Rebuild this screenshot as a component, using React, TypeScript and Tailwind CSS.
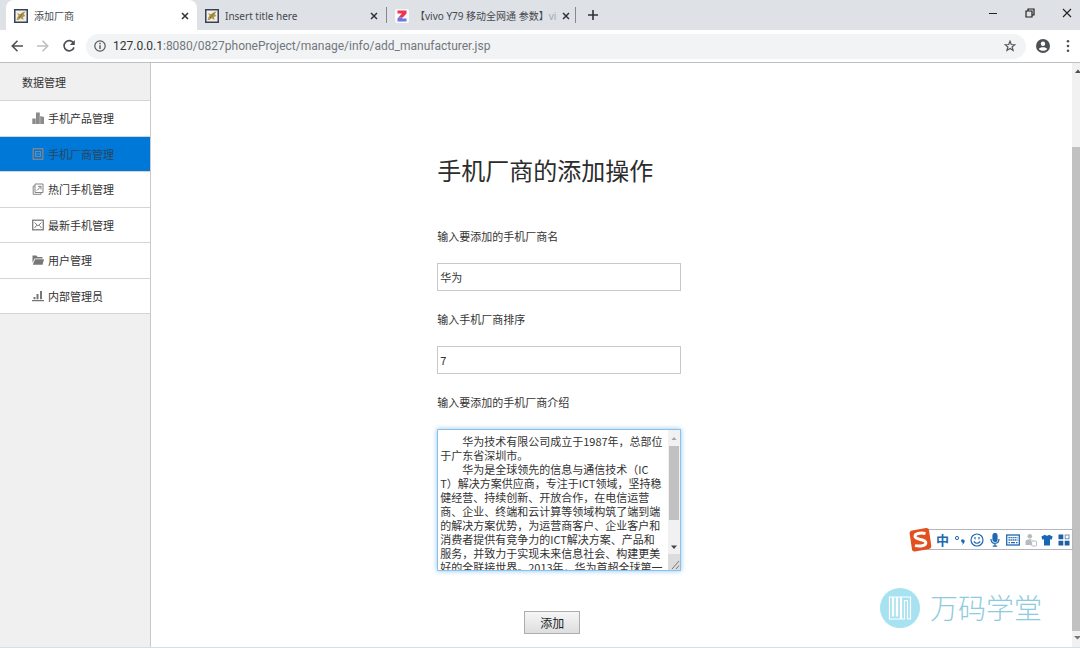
import type { ReactNode } from "react";

function PageIcon() {
  return (
    <svg viewBox="0 0 14 14" className="h-3.5 w-3.5 shrink-0" aria-hidden="true">
      <rect x="0.75" y="0.75" width="12.5" height="12.5" fill="#f4efe2" stroke="#34425a" strokeWidth="1.5" />
      <path d="M2.5 10.5 L4.5 6.5 L3 4 L6 5.2 L9 3 L11.5 2.5 L9.8 5 L11.3 7 L9 8 L9.5 11 L6.5 9.3 L4 11.3 Z" fill="#b09650" />
      <path d="M5 9 L8.5 4.5" stroke="#5c5746" strokeWidth="0.7" />
    </svg>
  );
}

function ZolIcon() {
  return (
    <svg viewBox="0 0 14 14" className="h-3.5 w-3.5 shrink-0" aria-hidden="true">
      <rect width="14" height="14" rx="2" fill="#fafafa" />
      <path d="M2.5 1.5 H11.5 V4.4 L8 8.2 H3.6 L7 4.5 H2.5 Z" fill="#ef3350" />
      <path d="M3.6 8.2 H8 L6.8 9.6 H11.5 V12.6 H2.5 V9.5 Z" fill="#6f74e6" />
    </svg>
  );
}

function CrossIcon() {
  return (
    <svg viewBox="0 0 8 8" className="h-2 w-2" stroke="#2f3237" strokeWidth="1.5" aria-hidden="true">
      <path d="M1 1 L7 7 M7 1 L1 7" />
    </svg>
  );
}

function Tab({ icon, title, active, faded }: { icon: ReactNode; title: string; active?: boolean; faded?: string }) {
  return (
    <div
      className={
        active
          ? "flex h-full w-[191px] items-center gap-1.5 rounded-t-lg bg-white px-2 pt-0.5"
          : "flex h-full items-center gap-1.5 px-2 pt-0.5"
      }
    >
      {icon}
      <span className="flex-1 text-[10px] leading-4 whitespace-nowrap text-[#45494d]">
        {title}
        {faded && <span className="text-[#a5a9ae]">{faded}</span>}
      </span>
      <button type="button" aria-label="关闭标签页" className="flex h-4 w-2 items-center justify-center">
        <CrossIcon />
      </button>
    </div>
  );
}

function TabStrip() {
  return (
    <header className="flex h-[30px] shrink-0 items-center bg-[#dee1e6] pl-1.5">
      <Tab icon={<PageIcon />} title="添加厂商" active />
      <div className="h-full w-[189px]">
        <Tab icon={<PageIcon />} title="Insert title here" />
      </div>
      <span className="h-4 w-px bg-[#85898f]" />
      <div className="h-full w-[188px]">
        <Tab icon={<ZolIcon />} title="【vivo Y79 移动全网通 参数】" faded="vi" />
      </div>
      <span className="h-4 w-px bg-[#85898f]" />
      <button type="button" aria-label="新标签页" className="ml-2.5 p-0.5">
        <svg viewBox="0 0 10 10" className="h-2.5 w-2.5" stroke="#2f3237" strokeWidth="1.6" aria-hidden="true">
          <path d="M5 0 V10 M0 5 H10" />
        </svg>
      </button>
      <div className="mr-2 mb-1 ml-auto flex items-center gap-[27px]">
        <button type="button" aria-label="最小化">
          <svg viewBox="0 0 10 10" className="h-2.5 w-2.5" stroke="#222" aria-hidden="true">
            <path d="M1 5.5 H9" />
          </svg>
        </button>
        <button type="button" aria-label="还原">
          <svg viewBox="0 0 10 10" className="h-2.5 w-2.5" fill="none" stroke="#222" strokeWidth="1.2" aria-hidden="true">
            <path d="M1 3 H7 V9 H1 Z M3 3 V1 H9 V7 H7" />
          </svg>
        </button>
        <button type="button" aria-label="关闭">
          <svg viewBox="0 0 10 10" className="h-2.5 w-2.5" stroke="#222" strokeWidth="1.1" aria-hidden="true">
            <path d="M1 1 L9 9 M9 1 L1 9" />
          </svg>
        </button>
      </div>
    </header>
  );
}

function Toolbar() {
  return (
    <nav className="flex h-[33px] shrink-0 items-center border-b border-[#bcbfc4] bg-white pr-1.5 pl-2.5">
      <button type="button" aria-label="后退">
        <svg viewBox="0 0 14 14" className="h-3.5 w-3.5" fill="none" stroke="#4d5156" strokeWidth="1.6" aria-hidden="true">
          <path d="M13 7 H2.5 M7.5 1.8 L2.3 7 L7.5 12.2" />
        </svg>
      </button>
      <button type="button" aria-label="前进" className="ml-3">
        <svg viewBox="0 0 14 14" className="h-3.5 w-3.5" fill="none" stroke="#bcbfc3" strokeWidth="1.6" aria-hidden="true">
          <path d="M1 7 H11.5 M6.5 1.8 L11.7 7 L6.5 12.2" />
        </svg>
      </button>
      <button type="button" aria-label="重新加载" className="ml-3">
        <svg viewBox="0 0 14 14" className="h-3.5 w-3.5" fill="none" stroke="#4d5156" strokeWidth="1.7" aria-hidden="true">
          <path d="M11.6 4.2 A5.1 5.1 0 1 0 12 8.4" />
          <path d="M12.8 1 V6 H7.8 Z" fill="#4d5156" stroke="none" />
        </svg>
      </button>
      <div className="ml-2.5 flex h-[25px] flex-1 items-center gap-[7px] rounded-full bg-[#f1f3f4] pr-2.5 pl-2">
        <svg viewBox="0 0 12 12" className="h-3 w-3 shrink-0" fill="none" stroke="#53575c" strokeWidth="1.2" aria-hidden="true">
          <circle cx="6" cy="6" r="5.2" />
          <path d="M6 5.2 V9 M6 2.8 V4.2" strokeWidth="1.4" />
        </svg>
        <span className="flex-1 font-['Roboto',sans-serif] text-xs leading-4 text-[#73777c]">
          <span className="text-[#303336]">127.0.0.1</span>:8080/0827phoneProject/manage/info/add_manufacturer.jsp
        </span>
        <button type="button" aria-label="为此标签页添加书签">
          <svg viewBox="0 0 12 12" className="h-3 w-3" fill="none" stroke="#53575c" strokeWidth="1.2" aria-hidden="true">
            <path d="M6 1.2 L7.3 4.5 L10.9 4.7 L8.1 7 L9.1 10.5 L6 8.5 L2.9 10.5 L3.9 7 L1.1 4.7 L4.7 4.5 Z" />
          </svg>
        </button>
      </div>
      <button type="button" aria-label="用户" className="ml-2.5">
        <svg viewBox="0 0 14 14" className="h-3.5 w-3.5" aria-hidden="true">
          <circle cx="7" cy="7" r="7" fill="#4d5156" />
          <circle cx="7" cy="4.8" r="2.2" fill="#fff" />
          <path d="M2.8 10 C4 7.8 10 7.8 11.2 10 C9.5 12.4 4.5 12.4 2.8 10 Z" fill="#fff" />
        </svg>
      </button>
      <button type="button" aria-label="菜单" className="ml-3">
        <svg viewBox="0 0 12 14" className="h-3.5 w-3" fill="#4d5156" aria-hidden="true">
          <circle cx="6" cy="2.2" r="1.3" />
          <circle cx="6" cy="7" r="1.3" />
          <circle cx="6" cy="11.8" r="1.3" />
        </svg>
      </button>
    </nav>
  );
}

const menu: { label: string; icon: ReactNode; active?: boolean }[] = [
  {
    label: "手机产品管理",
    icon: (
      <g fill="#8b8b8b">
        <path d="M4 0.5 H7.8 V12 H4 Z M8.2 4 L12 5 V12 H8.2 Z M0.3 6.5 H3.7 V12 H0.3 Z" />
      </g>
    ),
  },
  {
    label: "手机厂商管理",
    active: true,
    icon: (
      <g fill="none" stroke="#7c8793">
        <rect x="1.2" y="0.7" width="9.6" height="10.6" strokeWidth="1.3" />
        <path d="M3.5 3.5 H8.5 M3.5 6 H8.5 M3.5 8.5 H8.5 M3.5 3 V9 M8.5 3 V9" />
      </g>
    ),
  },
  {
    label: "热门手机管理",
    icon: (
      <g fill="none" stroke="#858585">
        <path d="M3 1 H11 V9.5 H3 Z M3 3 H1.2 V11.3 H9 V9.5" />
        <path d="M5 7.5 L8.8 3.5 M6 3.3 H9 V6.5" />
      </g>
    ),
  },
  {
    label: "最新手机管理",
    icon: (
      <g fill="none" stroke="#7c7c7c">
        <rect x="0.7" y="1.2" width="10.6" height="9.6" strokeWidth="1.3" />
        <path d="M2.5 3.5 L6 6.8 L9.5 3.5 M2.5 9 L4.8 6.2 M9.5 9 L7.2 6.2" />
      </g>
    ),
  },
  {
    label: "用户管理",
    icon: (
      <g fill="#777">
        <path d="M0.5 1.5 H4.5 L5.5 3 H10.5 V4.5 H2.5 L0.5 9 Z" />
        <path d="M3 5.2 H12 L10.5 10.8 H0.8 Z" />
      </g>
    ),
  },
  {
    label: "内部管理员",
    icon: (
      <g fill="#777">
        <path d="M0 10 H12 V11.3 H0 Z M1.5 7 H3.5 V9.3 H1.5 Z M4.5 4 H6.5 V9.3 H4.5 Z M8 1 H10 V9.3 H8 Z" />
      </g>
    ),
  },
];

function Sidebar() {
  return (
    <aside className="w-[151px] shrink-0 border-r border-[#c9c9cb] bg-[#f0f0f0] text-[11px] text-[#333]">
      <h2 className="flex h-[38px] items-center border-b border-[#d4d4d4] pt-0.5 pl-[22px]">数据管理</h2>
      <ul className="grid h-[213px] grid-rows-6">
        {menu.map((item) => (
          <li key={item.label} className="flex border-b border-[#d4d4d4]">
            <a
              href="#"
              className={
                item.active
                  ? "flex flex-1 items-center gap-1 bg-[#0078d7] pl-8 text-[#2b4560]"
                  : "flex flex-1 items-center gap-1 bg-white pl-8"
              }
            >
              <svg viewBox="0 0 12 12" className="h-3 w-3" aria-hidden="true">
                {item.icon}
              </svg>
              {item.label}
            </a>
          </li>
        ))}
      </ul>
    </aside>
  );
}

const intro = [
  "　　华为技术有限公司成立于1987年，总部位",
  "于广东省深圳市。",
  "　　华为是全球领先的信息与通信技术（IC",
  "T）解决方案供应商，专注于ICT领域，坚持稳",
  "健经营、持续创新、开放合作，在电信运营",
  "商、企业、终端和云计算等领域构筑了端到端",
  "的解决方案优势，为运营商客户、企业客户和",
  "消费者提供有竞争力的ICT解决方案、产品和",
  "服务，并致力于实现未来信息社会、构建更美",
  "好的全联接世界。2013年，华为首超全球第一",
].join("\n");

function ManufacturerForm() {
  return (
    <form className="w-[244px] pt-[89px] text-[11px] leading-4 text-[#333]" onSubmit={(e) => e.preventDefault()}>
      <h1 className="text-2xl leading-9 font-normal whitespace-nowrap text-[#2c2c2c]">手机厂商的添加操作</h1>
      <div className="mt-10 flex flex-col gap-5">
        <div className="flex flex-col gap-[19px]">
          <label htmlFor="name">输入要添加的手机厂商名</label>
          <input id="name" defaultValue="华为" className="h-7 w-full border border-[#c8c8c8] bg-white px-0.5 outline-none" />
        </div>
        <div className="flex flex-col gap-[19px]">
          <label htmlFor="order">输入手机厂商排序</label>
          <input id="order" defaultValue="7" className="h-7 w-full border border-[#c8c8c8] bg-white px-0.5 outline-none" />
        </div>
        <div className="flex flex-col gap-[19px]">
          <label htmlFor="intro">输入要添加的手机厂商介绍</label>
          <div className="flex h-[142px] border border-[#8fc0e6] bg-white shadow-[0_0_5px_#8cc4f0]">
            <textarea
              id="intro"
              defaultValue={intro}
              className="h-full min-w-0 flex-1 resize-none overflow-hidden py-1 pl-0.5 text-[11px] leading-[14px] whitespace-pre outline-none"
            />
            <div className="flex w-3 flex-col items-center bg-[#f1f1f1]" aria-hidden="true">
              <svg viewBox="0 0 12 16" className="h-4 w-3">
                <path d="M3.5 10 L6 7 L8.5 10 Z" fill="#a3a3a3" />
              </svg>
              <span className="h-[74px] w-2.5 bg-[#c1c1c1]" />
              <svg viewBox="0 0 12 15" className="mt-auto h-[15px] w-3">
                <path d="M3 6.5 L6 10 L9 6.5 Z" fill="#444" />
              </svg>
              <svg viewBox="0 0 12 16" className="h-4 w-3" stroke="#777">
                <rect width="12" height="16" fill="#dcdcdc" stroke="none" />
                <path d="M4 15 L11 7 M8 15 L11 11.5" />
              </svg>
            </div>
          </div>
        </div>
      </div>
      <button
        type="submit"
        className="mt-10 ml-[87px] h-[23px] w-14 border border-[#adadad] bg-linear-to-b from-[#f6f6f6] to-[#dedede] text-xs text-[#222]"
      >
        添加
      </button>
    </form>
  );
}

function PageScrollbar() {
  return (
    <div className="flex w-2 shrink-0 flex-col bg-[#f1f1f1]" aria-hidden="true">
      <svg viewBox="0 0 8 16" className="h-4 w-2">
        <path d="M3 10 L6 6.5 L9 10 Z" fill="#505050" />
      </svg>
      <span className="mt-[68px] w-full flex-1 bg-[#c1c1c1]" />
      <svg viewBox="0 0 8 16" className="h-4 w-2">
        <path d="M2 5 L5.5 8.5 L9 5 Z" fill="#777" />
      </svg>
    </div>
  );
}

function ImeBar() {
  return (
    <div className="absolute right-[7px] bottom-[98px] flex h-[21px] w-[152px] items-center justify-between border border-[#b5b5bf] bg-white pr-0.5 pl-3.5">
      <svg viewBox="0 0 24 26" className="absolute -left-3.5 h-[26px] w-6" aria-hidden="true">
        <path d="M4 3.5 L18 1 Q20.5 0.8 21 3 L23.3 19 Q23.5 21.5 21 22 L7 24.5 Q4.4 24.8 4 22.4 L1.6 6.5 Q1.4 4 4 3.5 Z" fill="#e2501f" />
        <path d="M17.5 6.5 C12 5.5 7 6.5 7 9.3 C7 13.3 17.5 11.5 17.8 15.6 C18 19 12 19.6 7 18.6" fill="none" stroke="#fff" strokeWidth="3" />
      </svg>
      <span className="w-[13px] text-[13px] leading-4 font-bold text-[#2068b0]">中</span>
      <svg viewBox="0 0 12 14" className="h-3.5 w-3" aria-hidden="true">
        <circle cx="3" cy="5" r="1.6" fill="none" stroke="#2068b0" />
        <path d="M7 7.8 A1.9 1.9 0 1 1 10.6 9 Q10 11.2 7.8 12 Q9 10.8 8.8 9.8 Q7.2 9.6 7 7.8 Z" fill="#2068b0" />
      </svg>
      <svg viewBox="0 0 14 14" className="h-3.5 w-3.5" fill="none" stroke="#2068b0" strokeWidth="1.2" aria-hidden="true">
        <circle cx="7" cy="7" r="6" />
        <path d="M5 4 V6.3 M9 4 V6.3 M3.8 8.5 Q7 12 10.2 8.5" />
      </svg>
      <svg viewBox="0 0 12 14" className="h-3.5 w-3" fill="none" stroke="#2068b0" strokeWidth="1.2" aria-hidden="true">
        <rect x="4" y="0.5" width="4" height="8" rx="2" fill="#2068b0" />
        <path d="M2 6 Q2 10.3 6 10.3 Q10 10.3 10 6 M6 10 V13 M3.8 13.2 H8.2" />
      </svg>
      <svg viewBox="0 0 14 12" className="h-3 w-3.5" fill="none" stroke="#2068b0" aria-hidden="true">
        <rect x="0.7" y="1" width="12.6" height="10" strokeWidth="1.3" />
        <path d="M2.5 3.7 H11.5 M2.5 6 H11.5" strokeWidth="1.3" strokeDasharray="1.4 0.6" />
        <path d="M2.5 8.6 H4 M5 8.6 H9 M10 8.6 H11.5" strokeWidth="1.3" />
      </svg>
      <svg viewBox="0 0 12 14" className="h-3.5 w-3" fill="#b6bac1" aria-hidden="true">
        <circle cx="4.8" cy="3.2" r="2.3" />
        <path d="M0.5 12 V8.5 Q1 6.3 4.8 6.3 Q7 6.3 8 7.3 H6 V12 Z" />
        <rect x="6.6" y="8" width="5" height="5" rx="1" fill="#fff" stroke="#b6bac1" />
      </svg>
      <svg viewBox="0 0 12 12" className="h-3 w-3" fill="#1767b5" aria-hidden="true">
        <path d="M4 0.8 Q6 2.5 8 0.8 L11.6 2.6 L10.6 5.8 L9 5.2 V11.5 H3 V5.2 L1.4 5.8 L0.4 2.6 Z" />
      </svg>
      <svg viewBox="0 0 12 12" className="h-3 w-3" fill="#1f5fa3" aria-hidden="true">
        <path d="M0.5 0.5 H5.3 V5.3 H0.5 Z M0.5 6.7 H5.3 V11.5 H0.5 Z M6.7 6.7 H11.5 V11.5 H6.7 Z" />
        <rect x="7.2" y="1" width="3.8" height="3.8" fill="none" stroke="#6f93b8" />
      </svg>
    </div>
  );
}

function Watermark() {
  return (
    <div className="absolute right-[38px] bottom-5 flex items-center gap-2.5 text-[#8fcbe0]">
      <svg viewBox="0 0 40 40" className="h-10 w-10" fill="none" aria-hidden="true">
        <circle cx="20" cy="20" r="20" fill="#a6e2f0" />
        <path
          d="M9.5 9 V31 H20.5 V9 H17.6 V28 H16.4 V9 H13.6 V28 H12.4 V9 Z M21.5 31 V9 H30.5 V31 H27.5 V12.5 H24.5 V31 Z"
          stroke="#fff"
          strokeWidth="1.2"
        />
      </svg>
      <span className="text-[28px] leading-10 font-light">万码学堂</span>
    </div>
  );
}

export default function App() {
  return (
    <div className="relative flex min-h-screen flex-col bg-white font-['Noto_Sans','Noto_Sans_CJK_SC',sans-serif]">
      <TabStrip />
      <Toolbar />
      <div className="flex flex-1 border-b border-[#d5dfe8] font-['Noto_Sans_CJK_SC',sans-serif]">
        <Sidebar />
        <main className="flex-1 pl-[26.5%]">
          <ManufacturerForm />
        </main>
        <PageScrollbar />
      </div>
      <ImeBar />
      <Watermark />
    </div>
  );
}
